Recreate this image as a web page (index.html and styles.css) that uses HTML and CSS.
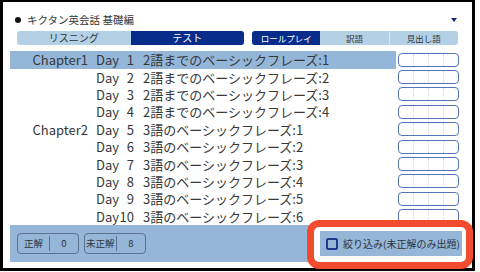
FILE: index.html
```html
<!DOCTYPE html>
<html lang="ja">
<head>
    <meta charset="UTF-8">
    <title>キクタン英会話 基礎編</title>
    <link rel="stylesheet" href="styles.css">
</head>
<body>
    <div class="screen">
        <div class="header">
            <span class="bullet"></span>
            <span class="title">キクタン英会話 基礎編</span>
            <span class="caret"></span>
        </div>

        <!-- モード切替 -->
        <div class="tabs">
            <div class="tab-group mode">
                <div class="tab">リスニング</div>
                <div class="tab active">テスト</div>
            </div>
            <div class="tab-group sub">
                <div class="tab active">ロールプレイ</div>
                <div class="tab">訳語</div>
                <div class="tab sep">見出し語</div>
            </div>
        </div>

        <ul class="lessons">
            <li class="lesson selected"><div class="label"><span class="chapter">Chapter1</span><span class="day"><span>Day</span><span>1</span></span><span class="name">2語までのベーシックフレーズ:1</span></div><div class="score"><i></i><i></i><i></i><i></i></div></li>
            <li class="lesson"><div class="label"><span class="chapter"></span><span class="day"><span>Day</span><span>2</span></span><span class="name">2語までのベーシックフレーズ:2</span></div><div class="score"><i></i><i></i><i></i><i></i></div></li>
            <li class="lesson"><div class="label"><span class="chapter"></span><span class="day"><span>Day</span><span>3</span></span><span class="name">2語までのベーシックフレーズ:3</span></div><div class="score"><i></i><i></i><i></i><i></i></div></li>
            <li class="lesson"><div class="label"><span class="chapter"></span><span class="day"><span>Day</span><span>4</span></span><span class="name">2語までのベーシックフレーズ:4</span></div><div class="score"><i></i><i></i><i></i><i></i></div></li>
            <li class="lesson"><div class="label"><span class="chapter">Chapter2</span><span class="day"><span>Day</span><span>5</span></span><span class="name">3語のベーシックフレーズ:1</span></div><div class="score"><i></i><i></i><i></i><i></i></div></li>
            <li class="lesson"><div class="label"><span class="chapter"></span><span class="day"><span>Day</span><span>6</span></span><span class="name">3語のベーシックフレーズ:2</span></div><div class="score"><i></i><i></i><i></i><i></i></div></li>
            <li class="lesson"><div class="label"><span class="chapter"></span><span class="day"><span>Day</span><span>7</span></span><span class="name">3語のベーシックフレーズ:3</span></div><div class="score"><i></i><i></i><i></i><i></i></div></li>
            <li class="lesson"><div class="label"><span class="chapter"></span><span class="day"><span>Day</span><span>8</span></span><span class="name">3語のベーシックフレーズ:4</span></div><div class="score"><i></i><i></i><i></i><i></i></div></li>
            <li class="lesson"><div class="label"><span class="chapter"></span><span class="day"><span>Day</span><span>9</span></span><span class="name">3語のベーシックフレーズ:5</span></div><div class="score"><i></i><i></i><i></i><i></i></div></li>
            <li class="lesson"><div class="label"><span class="chapter"></span><span class="day"><span>Day</span><span>10</span></span><span class="name">3語のベーシックフレーズ:6</span></div><div class="score"><i></i><i></i><i></i><i></i></div></li>
        </ul>

        <div class="footer">
            <div class="count"><span class="count-label">正解</span><span class="count-value">0</span></div>
            <div class="count second"><span class="count-label">未正解</span><span class="count-value">8</span></div>
        </div>

        <!-- 強調枠 -->
        <div class="callout">
            <div class="filter"><span class="check"></span>絞り込み(未正解のみ出題)</div>
        </div>
    </div>
</body>
</html>
```

FILE: styles.css
```css
body {
    margin: 0;
    background-color: #fff;
    font-family: "Noto Sans CJK JP", "Noto Sans", sans-serif;
    color: #383838;
}
.screen {
    position: relative;
    width: 475px;
    height: 271px;
    box-sizing: border-box;
    border: 3px solid #000;
    border-top-width: 2px;
}
.header {
    display: flex;
    align-items: center;
    height: 20px;
    padding: 8px 15px 0 12px;
}
.bullet {
    width: 6px;
    height: 6px;
    border-radius: 50%;
    background-color: #111;
}
.title {
    margin-left: 6px;
    font-size: 10.5px;
    line-height: 14px;
}
.caret {
    margin-left: auto;
    border-left: 3.5px solid transparent;
    border-right: 3.5px solid transparent;
    border-top: 4px solid #142a66;
}
.tabs {
    display: flex;
    gap: 8px;
    height: 14px;
    margin: 1px 0 0 14px;
}
.tab-group {
    display: flex;
    border-radius: 3px;
    overflow: hidden;
    background-color: #b4d0e4;
}
.tab-group.mode {
    width: 227px;
}
.tab-group.sub {
    width: 206px;
}
.tab {
    flex: 1;
    text-align: center;
    line-height: 14px;
    color: #2c3440;
}
.mode .tab {
    font-size: 10px;
}
.sub .tab {
    font-size: 8.5px;
}
.tab.sep {
    border-left: 1px solid #dbe7f0;
}
.tab.active {
    background-color: #072c8a;
    color: #fff;
}
.lessons {
    list-style: none;
    margin: 6px 0 0 7px;
    padding: 0;
}
.lesson {
    display: flex;
    align-items: center;
    height: 17.4px;
}
.label {
    display: flex;
    align-items: center;
    width: 386px;
    height: 18px;
    font-size: 13px;
    line-height: 17px;
}
.selected .label {
    background-color: #94b6d8;
}
.chapter {
    width: 78px;
    text-align: right;
}
.day {
    display: flex;
    justify-content: space-between;
    width: 38px;
    margin-left: 8px;
}
.name {
    margin-left: 9px;
}
.score {
    display: flex;
    width: 61px;
    height: 14px;
    margin-left: 2px;
    box-sizing: border-box;
    border: 1px solid #5574b8;
    border-radius: 4px;
}
.score i {
    flex: 1;
    border-left: 1px dotted #d6d6d6;
}
.score i:first-child {
    border-left: none;
}
.footer {
    display: flex;
    gap: 5px;
    width: 462px;
    height: 37px;
    margin-left: 7px;
    padding: 8px 0 0 7px;
    box-sizing: border-box;
    background-color: #95b6d6;
}
.count {
    display: flex;
    align-items: center;
    width: 62px;
    height: 21px;
    box-sizing: border-box;
    border: 1px solid #5f7191;
    border-radius: 4px;
    font-size: 9.5px;
    color: #2e3440;
}
.count-label {
    width: 31px;
    line-height: 15px;
    text-align: center;
    border-right: 1px solid #5f7191;
}
.count.second .count-label {
    width: 30px;
    text-align: left;
    padding-left: 1px;
}
.count-value {
    flex: 1;
    text-align: center;
}
.callout {
    position: absolute;
    left: 304px;
    top: 218px;
    width: 166px;
    height: 49px;
    box-sizing: border-box;
    padding: 4px 0 0 6px;
    border: 7px solid #f24b2f;
    border-radius: 12px;
    background-color: #fff;
}
.filter {
    display: flex;
    align-items: center;
    gap: 5px;
    width: 142px;
    height: 25px;
    padding-left: 6px;
    box-sizing: border-box;
    background-color: #95b6d6;
    font-size: 10px;
    color: #2e3440;
}
.check {
    width: 12px;
    height: 12px;
    box-sizing: border-box;
    border: 2px solid #1d3b8f;
    border-radius: 2px;
}
```
